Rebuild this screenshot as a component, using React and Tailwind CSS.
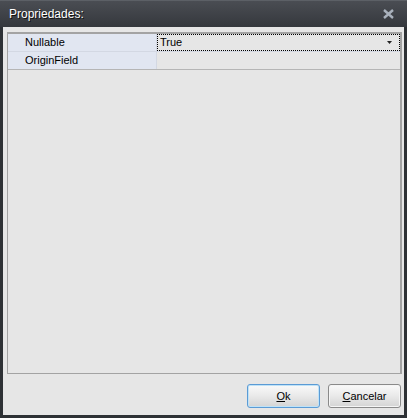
import React from "react";

const rows = [
  { name: "Nullable", value: "True", selected: true },
  { name: "OriginField", value: "" },
];

export default function App() {
  return (
    <div
      className="w-[407px] h-[418px] flex flex-col bg-[#2e3135] text-[11px] text-black"
      style={{ fontFamily: '"Liberation Sans", Arial, sans-serif' }}
    >
      {/* Title bar */}
      <div className="h-[27px] flex items-center justify-between pl-[9px] pr-[13px] border-t border-[#5c6066] bg-gradient-to-b from-[#4a4d53] to-[#35383d]">
        <span className="text-white text-[12px] [text-shadow:1px_1px_0_#111]">Propriedades:</span>
        <svg width="11" height="10" viewBox="0 0 11 10">
          <path d="M1 1 L10 9 M10 1 L1 9" stroke="#a9b1bc" strokeWidth="2.4" />
        </svg>
      </div>

      {/* Body */}
      <div className="flex-1 mx-[3px] mb-[3px] bg-[#e6e6e6] flex flex-col pt-[5px] pl-[4px] pr-[2px]">
        {/* Property grid */}
        <div className="h-[342px] border border-[#a3a3a3] border-t-2 border-r-2 flex flex-col">
          {rows.map((r) => (
            <div
              key={r.name}
              className="h-[18px] flex border-b border-[#d3d8e3] last:border-[#b5b5b5]"
            >
              <div className="w-[149px] bg-[#e1e6f1] border-r border-[#d3d8e3] pl-[17px] flex items-center">
                {r.name}
              </div>
              <div
                className={
                  "flex-1 flex items-center justify-between pl-[2px] pr-[7px] " +
                  (r.selected ? "border border-dotted border-black" : "")
                }
              >
                <span>{r.value}</span>
                {r.selected && (
                  <svg width="5" height="3" viewBox="0 0 5 3">
                    <path d="M0 0 H5 L2.5 3 Z" fill="#222" />
                  </svg>
                )}
              </div>
            </div>
          ))}
        </div>

        {/* Buttons */}
        <div className="flex justify-end gap-[8px] mt-[10px] pr-[1px]">
          <button className="w-[73px] h-[24px] rounded-[3px] border border-[#5b9bd5] shadow-[inset_0_0_0_1px_#bfe2f7] bg-gradient-to-b from-[#fafafa] via-[#e9e9e9] to-[#d4d4d4] text-[11px]">
            <span className="underline">O</span>k
          </button>
          <button className="w-[73px] h-[24px] rounded-[3px] border border-[#8a8a8a] shadow-[inset_0_0_0_1px_#f5f5f5] bg-gradient-to-b from-[#fafafa] via-[#e9e9e9] to-[#d4d4d4] text-[11px]">
            <span className="underline">C</span>ancelar
          </button>
        </div>
      </div>
    </div>
  );
}
